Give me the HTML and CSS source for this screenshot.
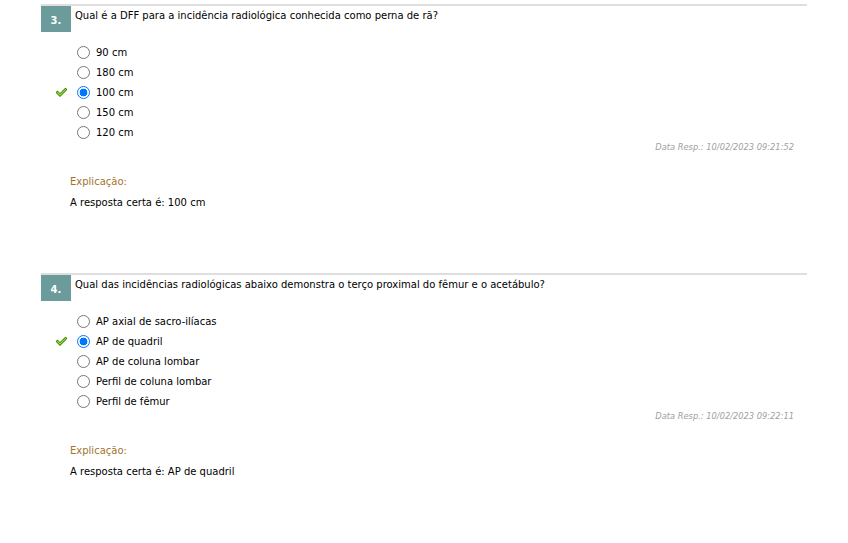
FILE: index.html
```html
<!DOCTYPE html>
<html lang="pt">
<head>
<meta charset="utf-8">
<link rel="stylesheet" href="styles.css">
</head>
<body>
<div class="page">
  <section class="question">
    <div class="q-head">
      <div class="q-num">3.</div>
      <div class="q-text">Qual é a DFF para a incidência radiológica conhecida como perna de rã?</div>
    </div>
    <ul class="options">
      <li class="opt"><span class="mark"></span><span class="radio"></span><span class="label">90 cm</span></li>
      <li class="opt"><span class="mark"></span><span class="radio"></span><span class="label">180 cm</span></li>
      <li class="opt"><span class="mark"><svg width="11" height="9" viewBox="0 0 11 9"><path d="M1.5 4.5 L4 7 L9.5 1.5" fill="none" stroke="#3f7f00" stroke-width="2.8" stroke-linecap="square" stroke-linejoin="miter"/><path d="M1.5 4.5 L4 7 L9.5 1.5" fill="none" stroke="#8fe03a" stroke-width="1.2" stroke-linecap="square" stroke-linejoin="miter"/></svg></span><span class="radio checked"></span><span class="label">100 cm</span></li>
      <li class="opt"><span class="mark"></span><span class="radio"></span><span class="label">150 cm</span></li>
      <li class="opt"><span class="mark"></span><span class="radio"></span><span class="label">120 cm</span></li>
    </ul>
    <div class="resp-date">Data Resp.: 10/02/2023 09:21:52</div>
    <div class="expl-title">Explicação:</div>
    <div class="expl-text">A resposta certa é: 100 cm</div>
  </section>

  <section class="question">
    <div class="q-head">
      <div class="q-num">4.</div>
      <div class="q-text">Qual das incidências radiológicas abaixo demonstra o terço proximal do fêmur e o acetábulo?</div>
    </div>
    <ul class="options">
      <li class="opt"><span class="mark"></span><span class="radio"></span><span class="label">AP axial de sacro-ilíacas</span></li>
      <li class="opt"><span class="mark"><svg width="11" height="9" viewBox="0 0 11 9"><path d="M1.5 4.5 L4 7 L9.5 1.5" fill="none" stroke="#3f7f00" stroke-width="2.8" stroke-linecap="square" stroke-linejoin="miter"/><path d="M1.5 4.5 L4 7 L9.5 1.5" fill="none" stroke="#8fe03a" stroke-width="1.2" stroke-linecap="square" stroke-linejoin="miter"/></svg></span><span class="radio checked"></span><span class="label">AP de quadril</span></li>
      <li class="opt"><span class="mark"></span><span class="radio"></span><span class="label">AP de coluna lombar</span></li>
      <li class="opt"><span class="mark"></span><span class="radio"></span><span class="label">Perfil de coluna lombar</span></li>
      <li class="opt"><span class="mark"></span><span class="radio"></span><span class="label">Perfil de fêmur</span></li>
    </ul>
    <div class="resp-date">Data Resp.: 10/02/2023 09:22:11</div>
    <div class="expl-title">Explicação:</div>
    <div class="expl-text">A resposta certa é: AP de quadril</div>
  </section>
</div>
</body>
</html>
```

FILE: styles.css
```css
* { box-sizing: border-box; }
html, body { margin: 0; padding: 0; background: #fff; }
body {
  font-family: "DejaVu Sans", Verdana, sans-serif;
  font-size: 10px;
  color: #000;
}
.page {
  padding: 4px 0 0 41px;
}
.question {
  width: 766px;
  border-top: 2px solid #dedede;
  height: 269px;
}
.q-head {
  display: flex;
  align-items: flex-start;
}
.q-num {
  width: 30px;
  height: 26px;
  background: #6b9b9b;
  color: #fff;
  font-weight: bold;
  font-size: 10px;
  display: flex;
  align-items: center;
  justify-content: center;
  padding-top: 3px;
}
.q-text {
  margin-left: 4px;
  padding-top: 4px;
  line-height: 12px;
}
.options {
  list-style: none;
  margin: 10px 0 0 0;
  padding: 0;
}
.opt {
  display: flex;
  align-items: center;
  height: 20px;
}
.mark {
  width: 36px;
  padding-left: 15px;
  display: flex;
  align-items: center;
}
.radio {
  width: 13px;
  height: 13px;
  border: 1px solid #767676;
  border-radius: 50%;
  background: #fff;
  flex: none;
}
.radio.checked {
  border: 1px solid #0075ff;
  background: radial-gradient(circle, #0075ff 0 3.6px, #fff 4.2px);
}
.label {
  margin-left: 6px;
}
.resp-date {
  text-align: right;
  padding-right: 13px;
  margin-top: 0;
  font-style: italic;
  font-size: 8.3px;
  color: #a0a0a0;
}
.expl-title {
  margin: 24px 0 0 29px;
  color: #a2742a;
}
.expl-text {
  margin: 10px 0 0 29px;
}
```
